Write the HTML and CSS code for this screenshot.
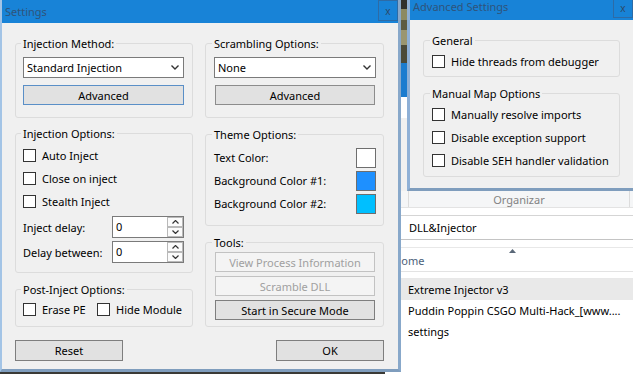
FILE: index.html
```html
<!DOCTYPE html>
<html lang="en">
<head>
    <meta charset="UTF-8">
    <meta name="viewport" content="width=device-width, initial-scale=1.0">
    <title>Settings</title>
    <link rel="stylesheet" href="styles.css">
</head>
<body>
<div class="desktop">

    <div class="strip"></div>

    <!-- explorer window behind the dialogs -->
    <div class="explorer">
        <div class="ribbon"><span class="ribbon-group">Organizar</span></div>
        <div class="address">DLL&amp;Injector</div>
        <div class="colhead">
            <svg class="sort" width="7" height="4" viewBox="0 0 7 4"><path d="M0 4 L3.5 0 L7 4 Z" fill="#5a6878"/></svg>
            <span class="colname">Nome</span>
        </div>
        <ul class="files">
            <li class="sel"><svg class="ico" width="16" height="16" viewBox="0 0 16 16"><rect x="3" y="4" width="12" height="9" fill="#3b7fd0"/></svg>Extreme Injector v3</li>
            <li><svg class="ico" width="16" height="16" viewBox="0 0 16 16"><rect x="3.5" y="0.5" width="11" height="15" fill="#fff" stroke="#8a8a8a"/></svg>Puddin Poppin CSGO Multi-Hack_[www....</li>
            <li><svg class="ico" width="16" height="16" viewBox="0 0 16 16"><rect x="3.5" y="0.5" width="11" height="15" fill="#fff" stroke="#8a8a8a"/></svg>settings</li>
        </ul>
    </div>

    <div class="window adv">
        <div class="titlebar"><span class="title">Advanced Settings</span><span class="close">x</span></div>
        <div class="adv-body">
            <fieldset class="group g-general">
                <legend>General</legend>
                <label class="check"><span class="box"></span>Hide threads from debugger</label>
            </fieldset>
            <fieldset class="group g-map">
                <legend>Manual Map Options</legend>
                <label class="check"><span class="box"></span>Manually resolve imports</label>
                <label class="check"><span class="box"></span>Disable exception support</label>
                <label class="check"><span class="box"></span>Disable SEH handler validation</label>
            </fieldset>
        </div>
    </div>

    <div class="window settings">
        <div class="titlebar"><span class="title">Settings</span><span class="close">x</span></div>
        <div class="settings-body">
            <div class="columns">
                <div class="col col-left">
                    <fieldset class="group g-method">
                        <legend>Injection Method:</legend>
                        <div class="combo"><span>Standard Injection</span><svg width="8" height="5" viewBox="0 0 8 5"><path d="M0.5 0.5 L4 4 L7.5 0.5" fill="none" stroke="#333" stroke-width="1.4"/></svg></div>
                        <button class="btn focused">Advanced</button>
                    </fieldset>
                    <fieldset class="group g-options">
                        <legend>Injection Options:</legend>
                        <label class="check"><span class="box"></span>Auto Inject</label>
                        <label class="check"><span class="box"></span>Close on inject</label>
                        <label class="check"><span class="box"></span>Stealth Inject</label>
                        <div class="field">
                            <span class="field-label">Inject delay:</span>
                            <div class="spin">
                                <span class="spin-val">0</span>
                                <span class="spin-btns">
                                    <span><svg width="7" height="4" viewBox="0 0 7 4"><path d="M0.5 3.5 L3.5 0.5 L6.5 3.5" fill="none" stroke="#333" stroke-width="1.2"/></svg></span>
                                    <span><svg width="7" height="4" viewBox="0 0 7 4"><path d="M0.5 0.5 L3.5 3.5 L6.5 0.5" fill="none" stroke="#333" stroke-width="1.2"/></svg></span>
                                </span>
                            </div>
                        </div>
                        <div class="field">
                            <span class="field-label">Delay between:</span>
                            <div class="spin">
                                <span class="spin-val">0</span>
                                <span class="spin-btns">
                                    <span><svg width="7" height="4" viewBox="0 0 7 4"><path d="M0.5 3.5 L3.5 0.5 L6.5 3.5" fill="none" stroke="#333" stroke-width="1.2"/></svg></span>
                                    <span><svg width="7" height="4" viewBox="0 0 7 4"><path d="M0.5 0.5 L3.5 3.5 L6.5 0.5" fill="none" stroke="#333" stroke-width="1.2"/></svg></span>
                                </span>
                            </div>
                        </div>
                    </fieldset>
                    <fieldset class="group g-post">
                        <legend>Post-Inject Options:</legend>
                        <div class="check-row">
                            <label class="check erase"><span class="box"></span>Erase PE</label>
                            <label class="check"><span class="box"></span>Hide Module</label>
                        </div>
                    </fieldset>
                </div>

                <div class="col col-right">
                    <fieldset class="group g-scramble">
                        <legend>Scrambling Options:</legend>
                        <div class="combo"><span>None</span><svg width="8" height="5" viewBox="0 0 8 5"><path d="M0.5 0.5 L4 4 L7.5 0.5" fill="none" stroke="#333" stroke-width="1.4"/></svg></div>
                        <button class="btn">Advanced</button>
                    </fieldset>
                    <fieldset class="group g-theme">
                        <legend>Theme Options:</legend>
                        <div class="color-row"><span>Text Color:</span><span class="swatch white"></span></div>
                        <div class="color-row"><span>Background Color #1:</span><span class="swatch blue1"></span></div>
                        <div class="color-row"><span>Background Color #2:</span><span class="swatch blue2"></span></div>
                    </fieldset>
                    <fieldset class="group g-tools">
                        <legend>Tools:</legend>
                        <button class="btn" disabled>View Process Information</button>
                        <button class="btn" disabled>Scramble DLL</button>
                        <button class="btn dark">Start in Secure Mode</button>
                    </fieldset>
                </div>
            </div>
            <div class="actions">
                <button class="btn dark wide">Reset</button>
                <button class="btn dark wide">OK</button>
            </div>
        </div>
    </div>

</div>
</body>
</html>
```

FILE: styles.css
```css
* {
    box-sizing: border-box;
}

body {
    margin: 0;
    background: #3a3a36;
    font-family: "Noto Sans", "Open Sans", sans-serif;
    font-size: 11px;
    color: #000;
    overflow: hidden;
}

.desktop {
    position: relative;
    width: 633px;
    height: 374px;
    overflow: hidden;
}

/* bit of desktop / other window visible between the dialogs */
.strip {
    position: absolute;
    left: 399px;
    top: 0;
    width: 10px;
    height: 191px;
    background: linear-gradient(#30302c 0 9px, #8c8a62 9px 20px, #5d5b42 20px 30px, #9a9670 30px 45px, #4b4a38 45px 63px, #1b7ccf 63px 97px, #fff 97px 118px, #f0f0f0 118px);
}

/* explorer */
.explorer {
    position: absolute;
    left: 385px;
    top: 191px;
    width: 248px;
    height: 183px;
    background: #fff;
    overflow: hidden;
    white-space: nowrap;
}

.ribbon {
    height: 17px;
    background: #f5f6f7;
    border-bottom: 1px solid #e3e3e3;
    padding-left: 23px;
}

.ribbon-group {
    display: flex;
    justify-content: center;
    align-items: center;
    width: 222px;
    height: 100%;
    border-left: 1px solid #dcdcdc;
    border-right: 1px solid #dcdcdc;
    color: #838383;
}

.address {
    margin-top: 7px;
    height: 25px;
    border-top: 1px solid #d5d5d5;
    border-bottom: 1px solid #c4c4c4;
    padding-left: 24px;
    display: flex;
    align-items: center;
}

.colhead {
    margin-top: 7px;
    height: 25px;
    border-top: 1px solid #e8e8e8;
    border-bottom: 1px solid #e3e3e3;
    display: flex;
    flex-direction: column;
}

.sort {
    margin: 1px 0 0 124px;
}

.colname {
    padding-left: 8px;
    line-height: 15px;
    color: #4c607a;
}

.files {
    margin: 6px 0 0;
    padding: 0;
    list-style: none;
    border-top: 1px solid #e8e8e8;
}

.files li {
    height: 21px;
    display: flex;
    align-items: center;
    gap: 6px;
    padding-left: 1px;
}

.files li.sel {
    background: #e9e9e9;
}

.ico {
    flex: none;
}

/* dialog windows */
.window {
    position: absolute;
    background: #f0f0f0;
    display: flex;
    flex-direction: column;
}

.titlebar {
    height: 23px;
    flex: none;
    background: #1883d7;
    display: flex;
    justify-content: space-between;
    align-items: flex-start;
}

.title {
    line-height: 23px;
    padding-left: 3px;
    color: #2f547b;
}

.adv .title {
    line-height: 20px;
}

.close {
    width: 20px;
    height: 21px;
    border: 1px solid #2d6ba6;
    color: #2c4a68;
    display: flex;
    align-items: center;
    justify-content: center;
    font-size: 10px;
    line-height: 1;
}

.settings {
    left: 0;
    top: 0;
    width: 401px;
    height: 372px;
    border-left: 2px solid #a3c4e6;
    border-right: 3px solid #88a8ca;
    border-bottom: 3px solid #7f9dbd;
    z-index: 3;
}

.adv {
    left: 407px;
    top: -3px;
    width: 229px;
    height: 194px;
    border-left: 3px solid #8fb0d6;
    border-right: 3px solid #88a8ca;
    border-bottom: 3px solid #7f9dbd;
    z-index: 2;
}

.settings-body {
    flex: 1;
    padding: 13px 14px 8px 13px;
    display: flex;
    flex-direction: column;
}

.adv-body {
    flex: 1;
    padding: 13px 0 0 13px;
    display: flex;
    flex-direction: column;
    gap: 9px;
}

.columns {
    display: grid;
    grid-template-columns: 178px 179px;
    column-gap: 12px;
    align-items: start;
}

.col {
    display: flex;
    flex-direction: column;
    gap: 9px;
}

.col-left {
    gap: 8px;
}

.actions {
    margin-top: 13px;
    display: flex;
    justify-content: space-between;
}

/* group boxes */
.group {
    margin: 0;
    min-width: 0;
    border: 1px solid #dcdcdc;
    border-radius: 3px;
    padding: 6px 8px 12px 7px;
}

.group legend {
    padding: 0 2px;
    margin-left: -2px;
    line-height: 15px;
}

.col-right .group {
    padding-left: 8px;
    padding-right: 7px;
}

.g-options {
    padding-top: 3px;
    padding-bottom: 9px;
}

.g-post {
    margin-top: 1px;
    padding-top: 1px;
    padding-bottom: 5px;
}

.col-right .g-theme {
    padding-top: 4px;
    padding-bottom: 10px;
}

.col-right .g-tools {
    padding-top: 2px;
    padding-bottom: 6px;
}

.g-general,
.g-map {
    width: 197px;
    padding: 2px 8px 3px 8px;
}

.g-map {
    padding-bottom: 4px;
}

/* controls */
.combo {
    height: 21px;
    border: 1px solid #7a7a7a;
    background: #fff;
    display: flex;
    align-items: center;
    justify-content: space-between;
    padding: 0 4px 0 3px;
}

.btn {
    display: flex;
    align-items: center;
    justify-content: center;
    width: 100%;
    height: 20px;
    margin: 0;
    padding: 0;
    border: 1px solid #8c8c8c;
    background: #e1e1e1;
    font-family: inherit;
    font-size: 11px;
    color: #000;
}

.combo + .btn {
    margin-top: 7px;
}

.col-right .combo + .btn {
    width: 160px;
    margin-left: 1px;
}

.btn.focused {
    border-color: #5a8fc7;
}

.btn.dark {
    border-color: #7e7e7e;
}

.btn:disabled {
    background: #f4f4f4;
    border-color: #c2c2c2;
    color: #a0a0a0;
}

.g-tools .btn {
    width: 160px;
    margin-left: 1px;
}

.g-tools .btn + .btn {
    margin-top: 4px;
}

.btn.wide {
    width: 108px;
    height: 21px;
}

.check {
    display: flex;
    align-items: center;
    gap: 6px;
    height: 23px;
}

.box {
    flex: none;
    width: 13px;
    height: 13px;
    border: 1px solid #333;
    background: #fff;
}

.check-row {
    display: flex;
}

.erase {
    width: 74px;
}

.field {
    display: flex;
    align-items: center;
    height: 22px;
    margin-top: 3px;
}

.field-label {
    width: 89px;
}

.spin {
    display: flex;
    width: 72px;
    height: 22px;
    border: 1px solid #7a7a7a;
    background: #fff;
}

.spin-val {
    flex: 1;
    padding-left: 3px;
    line-height: 19px;
}

.spin-btns {
    width: 16px;
    display: flex;
    flex-direction: column;
}

.spin-btns span {
    flex: 1;
    display: flex;
    align-items: center;
    justify-content: center;
    border: 1px solid #b9b9b9;
    background: #fbfbfb;
}

.color-row {
    display: flex;
    align-items: center;
    justify-content: space-between;
    height: 23px;
}

.swatch {
    width: 20px;
    height: 20px;
    border: 1px solid #6e6e6e;
}

.swatch.white {
    background: #fff;
}

.swatch.blue1 {
    background: #1e90ff;
}

.swatch.blue2 {
    background: #00bfff;
}
```
